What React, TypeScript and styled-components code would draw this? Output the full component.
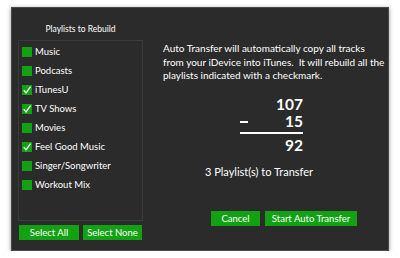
import React from "react";
import styled, { createGlobalStyle } from "styled-components";

const Global = createGlobalStyle`
  html, body { margin: 0; padding: 0; background: #ffffff; }
  body { font-family: Lato, "Open Sans", sans-serif; }
`;

const Window = styled.div`
  margin: 7px 0 0 11px;
  width: 378px;
  height: 244px;
  box-sizing: border-box;
  background: #2b2b2b;
  border: 1px solid #4a4a4a;
  box-shadow: 0 1px 4px rgba(0, 0, 0, 0.45);
  display: flex;
  color: #ffffff;
`;

const LeftPanel = styled.div`
  width: 125px;
  margin-left: 6px;
  padding-top: 15px;
  display: flex;
  flex-direction: column;
`;

const Header = styled.div`
  font-size: 8.5px;
  text-align: center;
  height: 17px;
  line-height: 12px;
`;

const ListBox = styled.div`
  height: 181px;
  box-sizing: border-box;
  border: 1px solid #3a3a3a;
  padding: 1px 0 0 3px;
`;

const Row = styled.div`
  height: 19px;
  display: flex;
  align-items: center;
  gap: 3px;
  font-size: 9.5px;
`;

const Box = styled.span`
  width: 10px;
  height: 10px;
  background: #12a112;
  display: inline-flex;
  align-items: center;
  justify-content: center;
`;

const ButtonRow = styled.div`
  display: flex;
  gap: 4px;
  margin-top: 4px;
  padding-left: 1px;
`;

const GreenButton = styled.button<{ $w: number }>`
  width: ${(p) => p.$w}px;
  height: 15px;
  padding: 0;
  border: none;
  background: #12a112;
  color: #ffffff;
  font-family: Lato, "Open Sans", sans-serif;
  font-size: 9.5px;
  line-height: 15px;
`;

const RightPanel = styled.div`
  margin-left: 20px;
  padding-top: 34px;
  display: flex;
  flex-direction: column;
`;

const Paragraph = styled.p`
  margin: 0;
  font-size: 10px;
  line-height: 13.5px;
  width: 215px;
  white-space: nowrap;
`;

const MathBlock = styled.div`
  margin: 13px 0 0 77px;
  width: 63px;
  display: grid;
  grid-template-columns: 1fr auto;
  font-weight: 700;
  font-size: 15.5px;
  line-height: 17px;
`;

const Num = styled.div`
  grid-column: 2;
  text-align: right;
`;

const Minus = styled.div`
  grid-column: 1;
  display: flex;
  align-items: center;
  padding-top: 1px;
`;

const MinusBar = styled.span`
  width: 8px;
  height: 2px;
  background: #ffffff;
`;

const Rule = styled.div`
  grid-column: 1 / 3;
  height: 2px;
  background: #ffffff;
  margin: 2px 0 3px;
`;

const Summary = styled.div`
  margin: 11px 0 0 42px;
  font-size: 11px;
  line-height: 14px;
`;

const ActionRow = styled.div`
  display: flex;
  gap: 5px;
  margin: 32px 0 0 48px;
`;

const Check = () => (
  <svg width="10" height="10" viewBox="0 0 10 10">
    <path d="M1.8 5.2 L4 8 L8.6 1.6" stroke="#ffffff" strokeWidth="1.3" fill="none" />
  </svg>
);

const items: { name: string; checked: boolean }[] = [
  { name: "Music", checked: false },
  { name: "Podcasts", checked: false },
  { name: "iTunesU", checked: true },
  { name: "TV Shows", checked: true },
  { name: "Movies", checked: false },
  { name: "Feel Good Music", checked: true },
  { name: "Singer/Songwriter", checked: false },
  { name: "Workout Mix", checked: false },
];

export default function App() {
  return (
    <>
      <Global />
      <Window>
        <LeftPanel>
          <Header>Playlists to Rebuild</Header>
          <ListBox>
            {items.map((it) => (
              <Row key={it.name}>
                <Box>{it.checked && <Check />}</Box>
                <span>{it.name}</span>
              </Row>
            ))}
          </ListBox>
          <ButtonRow>
            <GreenButton $w={60}>Select All</GreenButton>
            <GreenButton $w={59}>Select None</GreenButton>
          </ButtonRow>
        </LeftPanel>
        <RightPanel>
          <Paragraph>
            Auto Transfer will automatically copy all tracks
            <br />
            from your iDevice into iTunes.&nbsp; It will rebuild all the
            <br />
            playlists indicated with a checkmark.
          </Paragraph>
          <MathBlock>
            <Num>107</Num>
            <Minus>
              <MinusBar />
            </Minus>
            <Num>15</Num>
            <Rule />
            <Num>92</Num>
          </MathBlock>
          <Summary>3 Playlist(s) to Transfer</Summary>
          <ActionRow>
            <GreenButton $w={49}>Cancel</GreenButton>
            <GreenButton $w={92}>Start Auto Transfer</GreenButton>
          </ActionRow>
        </RightPanel>
      </Window>
    </>
  );
}
